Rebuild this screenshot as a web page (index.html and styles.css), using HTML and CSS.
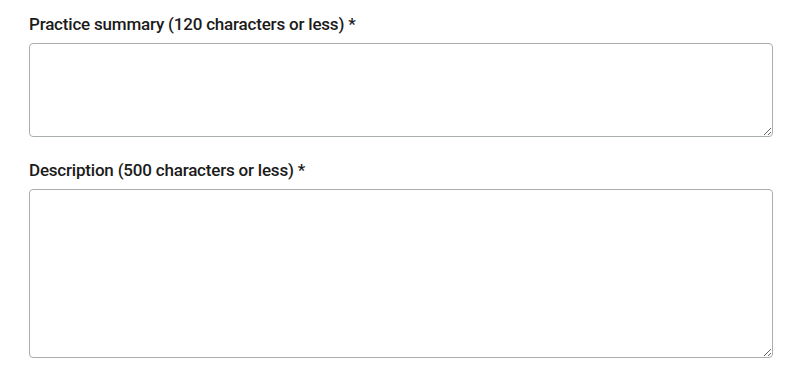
FILE: index.html
```html
<!DOCTYPE html>
<html lang="en">
<head>
<meta charset="utf-8">
<title>Practice form</title>
<link rel="stylesheet" href="styles.css">
</head>
<body>
<form class="form">
  <div class="field">
    <label class="label" for="summary">Practice summary (120 characters or less) *</label>
    <textarea class="input input-short" id="summary"></textarea>
  </div>
  <div class="field">
    <label class="label" for="desc">Description (500 characters or less) *</label>
    <textarea class="input input-tall" id="desc"></textarea>
  </div>
</form>
</body>
</html>
```
FILE: styles.css
```css
html, body {
  margin: 0;
  padding: 0;
  background: #ffffff;
}
.form {
  display: flex;
  flex-direction: column;
  gap: 22px;
  padding: 13px 27px 0 29px;
  font-family: Roboto, "Liberation Sans", sans-serif;
}
.field {
  display: flex;
  flex-direction: column;
  gap: 8px;
}
.label {
  font-size: 17px;
  font-weight: 500;
  line-height: 22px;
  color: #1b1b1b;
  letter-spacing: -0.2px;
}
.input {
  box-sizing: border-box;
  width: 744px;
  margin: 0;
  border: 1px solid #a9aeb1;
  border-radius: 4px;
  background: #fff;
  resize: vertical;
  font-family: inherit;
  font-size: 16px;
  padding: 8px;
}
.input-short { height: 94px; }
.input-tall { height: 169px; }
```
